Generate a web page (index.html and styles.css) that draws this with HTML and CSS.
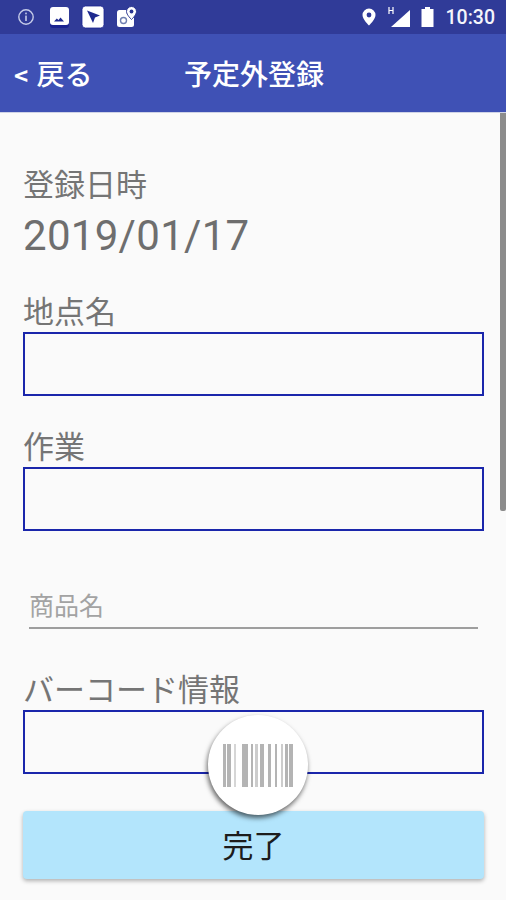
FILE: index.html
```html
<!DOCTYPE html>
<html lang="ja">
  <head>
    <meta charset="UTF-8" />
    <title>予定外登録</title>
    <link rel="stylesheet" href="styles.css">
  </head>
  <body>
    <div class="screen">
      <!-- Status bar -->
      <div class="status-bar">
        <div class="status-left">
          <svg class="ic" width="18" height="18" viewBox="0 0 18 18">
            <circle cx="9" cy="9" r="7.200" fill="none" stroke="#c5cbe8" stroke-width="1.400"/>
            <rect x="8.200" y="7.600" width="1.600" height="5.400" fill="#c5cbe8"/>
            <rect x="8.200" y="4.600" width="1.600" height="1.700" fill="#c5cbe8"/>
          </svg>
          <svg class="ic ic-image" width="22" height="22" viewBox="0 0 22 22">
            <rect x="1" y="2" width="19" height="20" rx="3" fill="#1a2391"/>
            <rect x="1" y="1" width="19" height="18" rx="3" fill="#fff"/>
            <path d="M5 15.500l2.800-3 1.700 1.500 2-2.500 3.500 4z" fill="#1f2a8f"/>
          </svg>
          <svg class="ic" width="24" height="24" viewBox="0 0 24 24">
            <rect x="1" y="1" width="22" height="22" rx="3.500" fill="#fff" stroke="#1a2391" stroke-width="0.800"/>
            <path d="M6 5.500l13 5-5 2-2 5.500z" fill="#1f2a8f"/>
          </svg>
          <svg class="ic ic-map" width="22" height="24" viewBox="0 0 22 24">
            <rect x="1" y="5" width="17" height="17" rx="2.500" fill="#fff"/>
            <circle cx="7.500" cy="15.500" r="3" fill="none" stroke="#6f7fb0" stroke-width="1.400"/>
            <path d="M15.500 1.500a5 5 0 0 1 5 5c0 3.400-5 8-5 8s-5-4.600-5-8a5 5 0 0 1 5-5z" fill="#fff" stroke="#2a3590" stroke-width="1"/>
            <circle cx="15.500" cy="6.500" r="1.900" fill="#2a3590"/>
          </svg>
        </div>
        <div class="status-right">
          <svg width="16" height="20" viewBox="0 0 16 20">
            <path d="M8 1.500a6.500 6.500 0 0 1 6.500 6.500c0 4.500-6.500 10.500-6.500 10.500S1.500 12.500 1.500 8A6.500 6.500 0 0 1 8 1.500z" fill="#fff"/>
            <circle cx="8" cy="8" r="2.400" fill="#2f3a9a"/>
          </svg>
          <svg class="signal" width="24" height="22" viewBox="0 0 24 22">
            <path d="M23 4v17H4z" fill="#fff"/>
            <path d="M2 1v7M6 1v7M2 4.500h4" stroke="#fff" stroke-width="1.200" fill="none"/>
          </svg>
          <svg width="16" height="22" viewBox="0 0 16 22">
            <path d="M5 1h5v2h3.500v18H1.500V3H5z" fill="#fff"/>
          </svg>
          <span class="clock">10:30</span>
        </div>
      </div>

      <!-- Title bar -->
      <div class="title-bar">
        <span class="back"><span class="chevron">&lt;</span> 戻る</span>
        <span class="title">予定外登録</span>
      </div>

      <!-- Form -->
      <div class="content">
        <div class="scroll-thumb"></div>
        <div class="label label-date">登録日時</div>
        <div class="date">2019/01/17</div>
        <div class="label label-place">地点名</div>
        <div class="box"></div>
        <div class="label label-work">作業</div>
        <div class="box"></div>
        <div class="plain-input">商品名</div>
        <div class="label label-code">バーコード情報</div>
        <div class="box"></div>
        <button class="done">完了</button>
        <div class="scan-btn">
          <svg width="71" height="43" viewBox="0 0 71 43">
            <g fill="#b4b4b4">
              <rect x="0" y="0" width="3" height="43"/>
              <rect x="4" y="0" width="4" height="43"/>
              <rect x="11" y="0" width="2" height="43" fill="#d6d6d6"/>
              <rect x="19" y="0" width="6" height="43"/>
              <rect x="28" y="0" width="2" height="43"/>
              <rect x="32" y="0" width="3" height="43" fill="#cccccc"/>
              <rect x="37" y="0" width="4" height="43"/>
              <rect x="45" y="0" width="3" height="43"/>
              <rect x="52" y="0" width="2" height="43"/>
              <rect x="58" y="0" width="2" height="43" fill="#cccccc"/>
              <rect x="62" y="0" width="3" height="43"/>
              <rect x="66" y="0" width="4" height="43"/>
            </g>
          </svg>
        </div>
      </div>
    </div>
  </body>
</html>
```

FILE: styles.css
```css
html, body {
  margin: 0;
  padding: 0;
}
body {
  font-family: "Noto Sans CJK JP", "Roboto", sans-serif;
  background-color: #fafafa;
}
.screen {
  width: 506px;
  height: 900px;
  overflow: hidden;
  display: flex;
  flex-direction: column;
}
.status-bar {
  height: 34px;
  background-color: #303b98;
  display: flex;
  justify-content: space-between;
  align-items: center;
  padding: 0 11px 0 17px;
}
.status-left {
  display: flex;
  align-items: center;
  gap: 10px;
}
.status-left .ic-image {
  margin-left: 4px;
}
.status-left .ic-map {
  margin-left: 1px;
}
.status-right {
  display: flex;
  align-items: center;
  gap: 9px;
}
.clock {
  font-family: Roboto, sans-serif;
  font-size: 19.5px;
  font-weight: 500;
  color: #f4f5fb;
  margin-left: 1px;
}
.signal {
  margin-left: 1px;
}
.title-bar {
  height: 79px;
  background-color: #3f51b5;
  color: #fff;
  position: relative;
  display: flex;
  align-items: center;
  justify-content: center;
  border-bottom: 1px solid #cfd3e6;
  box-sizing: border-box;
}
.back {
  position: absolute;
  left: 14px;
  top: 21px;
  font-size: 28px;
  line-height: 36px;
  font-weight: 500;
}
.chevron {
  font-size: 24px;
  font-weight: 700;
  margin-right: 2px;
}
.title {
  font-size: 28px;
  line-height: 40px;
  font-weight: 500;
  margin-left: 2px;
}
.content {
  flex: 1;
  position: relative;
  padding: 47px 22px 0 23px;
  background-color: #fafafa;
}
.scroll-thumb {
  position: absolute;
  right: 0;
  top: 0;
  width: 6px;
  height: 398px;
  border-radius: 0 0 2px 2px;
  background-color: #8c8c8c;
}
.label {
  font-size: 31px;
  line-height: 40px;
  color: #757575;
}
.date {
  font-family: Roboto, sans-serif;
  font-size: 42px;
  line-height: 50px;
  color: #6e6e6e;
  margin-top: 8px;
  letter-spacing: 0.3px;
}
.label-date { margin-top: 3px; margin-bottom: 0; }
.label-place { margin-top: 29px; margin-bottom: 2px; }
.label-work { margin-top: 29px; margin-bottom: 2px; }
.label-code { margin-top: 39px; margin-bottom: 2px; }
.box {
  height: 64px;
  box-sizing: border-box;
  border: 2px solid #1a26ab;
  background-color: #fafafa;
}
.plain-input {
  margin: 52px 6px 0 6px;
  height: 44px;
  font-size: 25px;
  line-height: 42px;
  color: #a3a3a3;
  border-bottom: 2px solid #9e9e9e;
}
.done {
  display: block;
  width: 100%;
  height: 68px;
  margin-top: 37px;
  border: none;
  border-radius: 4px;
  background-color: #b3e5fc;
  color: #1c1c1c;
  font-family: "Noto Sans CJK JP", sans-serif;
  font-size: 31px;
  box-shadow: 0 2px 4px rgba(0, 0, 0, 0.3);
  padding: 0 0 3px 0;
}
.scan-btn {
  position: absolute;
  left: 208px;
  top: 602px;
  width: 100px;
  height: 100px;
  border-radius: 50%;
  background-color: #fff;
  box-shadow: -1px 3px 5px rgba(0, 0, 0, 0.6);
  display: flex;
  align-items: center;
  justify-content: center;
}
```
